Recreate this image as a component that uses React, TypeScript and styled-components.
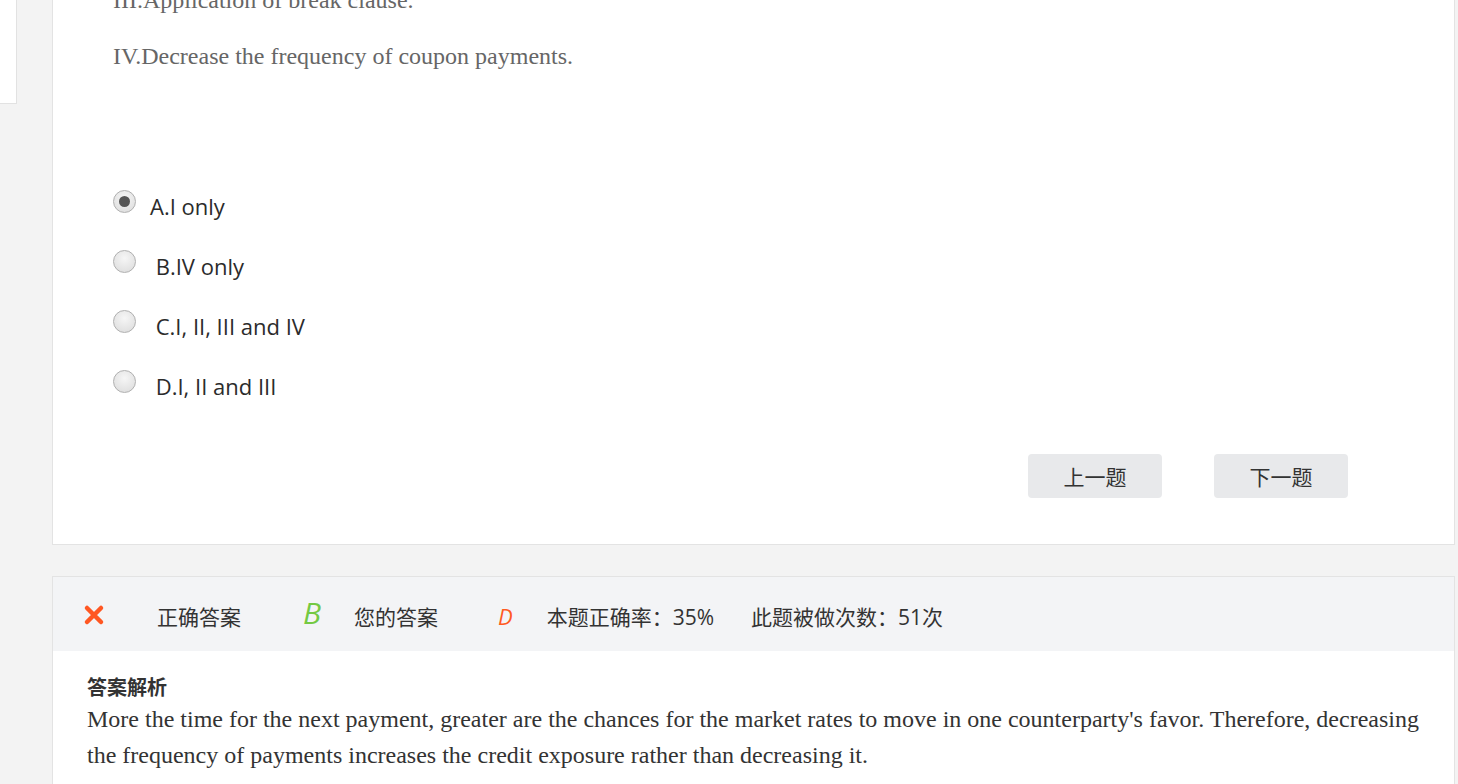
import React from 'react'
import styled, { createGlobalStyle } from 'styled-components'

const GlobalStyle = createGlobalStyle`
  html, body {
    margin: 0;
    padding: 0;
    background: #f3f3f3;
    overflow: hidden;
  }
  body {
    font-family: 'Open Sans', 'Noto Sans CJK SC', sans-serif;
    color: #333;
  }
`

const Page = styled.div`
  display: flex;
  align-items: flex-start;
  gap: 35px;
  margin-top: -60px;
  height: 844px;
`

const Sidebar = styled.div`
  width: 17px;
  height: 164px;
  background: #fff;
  border-right: 1px solid #e2e2e2;
  border-bottom: 1px solid #e2e2e2;
  box-sizing: border-box;
`

const Main = styled.div`
  width: 1403px;
  display: flex;
  flex-direction: column;
  gap: 31px;
`

const QuestionCard = styled.div`
  background: #fff;
  border: 1px solid #e3e3e3;
  padding: 41px 106px 46px 60px;
  display: flex;
  flex-direction: column;
`

const Statement = styled.p`
  margin: 0 0 20px;
  font-family: 'Liberation Serif', 'Times New Roman', serif;
  font-size: 24px;
  line-height: 36px;
  color: #666;
`

const OptionList = styled.div`
  margin-top: 82px;
  display: flex;
  flex-direction: column;
`

const OptionRow = styled.label`
  height: 60px;
  display: flex;
  align-items: center;
  gap: 14px;
  cursor: pointer;
`

const Radio = styled.span<{ $checked?: boolean }>`
  width: 23px;
  height: 23px;
  flex-shrink: 0;
  border-radius: 50%;
  box-sizing: border-box;
  border: 1px solid #b0b0b0;
  background: radial-gradient(circle at 50% 35%, #f6f6f6 0%, #dadada 100%);
  display: flex;
  align-items: center;
  justify-content: center;
  margin-top: -9px;

  &::after {
    content: '';
    width: 11px;
    height: 11px;
    border-radius: 50%;
    background: ${({ $checked }) => ($checked ? '#555' : 'transparent')};
  }
`

const OptionText = styled.span`
  font-size: 22px;
  color: #2b2b2b;
  white-space: pre;
`

const ButtonRow = styled.div`
  margin-top: 38px;
  display: flex;
  justify-content: flex-end;
  gap: 52px;
`

const NavButton = styled.button`
  width: 134px;
  height: 44px;
  border: none;
  border-radius: 4px;
  background: #e8e9eb;
  font-family: 'Noto Sans CJK SC', sans-serif;
  font-size: 21px;
  color: #333;
  cursor: pointer;
`

const AnswerCard = styled.div`
  background: #fff;
  border: 1px solid #e3e3e3;
`

const AnswerHeader = styled.div`
  height: 74px;
  background: #f3f4f6;
  display: flex;
  align-items: center;
  padding-left: 30px;
  padding-top: 4px;
  box-sizing: border-box;
`

const HeaderItem = styled.span<{ $ml: number }>`
  margin-left: ${({ $ml }) => $ml}px;
  font-family: 'Open Sans', 'Noto Sans CJK SC', sans-serif;
  font-size: 21px;
  color: #333;
  display: flex;
  align-items: center;
`

const Letter = styled.span<{ $color: string; $size: number; $ml: number; $mt: number }>`
  margin-left: ${({ $ml }) => $ml}px;
  margin-top: ${({ $mt }) => $mt}px;
  font-family: 'Open Sans', sans-serif;
  font-style: italic;
  font-size: ${({ $size }) => $size}px;
  color: ${({ $color }) => $color};
  line-height: 1;
`

const AnswerBody = styled.div`
  padding: 22px 34px 20px;
`

const AnalysisTitle = styled.div`
  font-family: 'Noto Sans CJK SC', sans-serif;
  font-weight: 700;
  font-size: 20px;
  line-height: 28px;
  color: #333;
`

const AnalysisText = styled.p`
  margin: 0;
  font-family: 'Liberation Serif', 'Times New Roman', serif;
  font-size: 24px;
  line-height: 36px;
  color: #333;
`

const options = [
  { text: 'A.I only', checked: true },
  { text: ' B.IV only', checked: false },
  { text: ' C.I, II, III and IV', checked: false },
  { text: ' D.I, II and III', checked: false },
]

function WrongIcon() {
  return (
    <svg width="22" height="22" viewBox="0 0 22 22" style={{ marginTop: -3 }}>
      <path
        d="M4 4 L18 18 M18 4 L4 18"
        stroke="#ff5722"
        strokeWidth="4.5"
        strokeLinecap="round"
      />
    </svg>
  )
}

function App() {
  return (
    <>
      <GlobalStyle />
      <Page>
        <Sidebar />
        <Main>
          <QuestionCard>
            <Statement>III.Application of break clause.</Statement>
            <Statement>IV.Decrease the frequency of coupon payments.</Statement>
            <OptionList>
              {options.map((option) => (
                <OptionRow key={option.text}>
                  <Radio $checked={option.checked} />
                  <OptionText>{option.text}</OptionText>
                </OptionRow>
              ))}
            </OptionList>
            <ButtonRow>
              <NavButton>上一题</NavButton>
              <NavButton>下一题</NavButton>
            </ButtonRow>
          </QuestionCard>
          <AnswerCard>
            <AnswerHeader>
              <WrongIcon />
              <HeaderItem $ml={52}>正确答案</HeaderItem>
              <Letter $color="#74c943" $size={30} $ml={62} $mt={-6}>B</Letter>
              <HeaderItem $ml={33}>您的答案</HeaderItem>
              <Letter $color="#ff5a1f" $size={22} $ml={60} $mt={0}>D</Letter>
              <HeaderItem $ml={34}>本题正确率：35%</HeaderItem>
              <HeaderItem $ml={37}>此题被做次数：51次</HeaderItem>
            </AnswerHeader>
            <AnswerBody>
              <AnalysisTitle>答案解析</AnalysisTitle>
              <AnalysisText>
                More the time for the next payment, greater are the chances for the market rates
                to move in one counterparty's favor. Therefore, decreasing the frequency of
                payments increases the credit exposure rather than decreasing it.
              </AnalysisText>
            </AnswerBody>
          </AnswerCard>
        </Main>
      </Page>
    </>
  )
}

export default App
